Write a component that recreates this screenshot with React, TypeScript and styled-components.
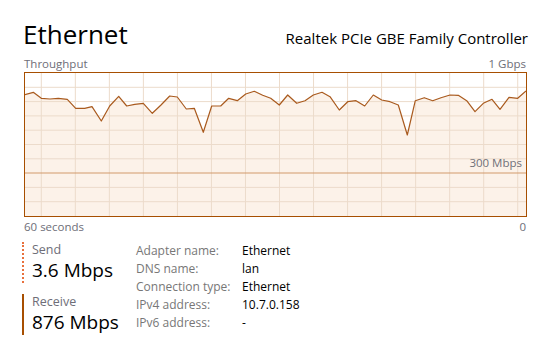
import styled, { createGlobalStyle } from 'styled-components';

const GlobalStyle = createGlobalStyle`
  body {
    margin: 0;
    background: #fff;
    font-family: 'Open Sans', 'Noto Sans', sans-serif;
    color: #000;
  }
`;

// throughput samples, one per second (graph coordinates)
const samples: [number, number][] = [
  [24, 95], [33.3, 92.3], [41.3, 98.3], [50, 99], [58.3, 98.3], [67.3, 99.3],
  [75.7, 108.3], [84.7, 108.3], [92, 106.7], [101.3, 121], [109.7, 106],
  [118.7, 96.3], [126.7, 106], [134.7, 104.3], [143.3, 103.3], [152.3, 113.3],
  [161, 105], [169.7, 96], [177.3, 97], [186.3, 109], [194.3, 108.3],
  [203.3, 132.3], [211.7, 106], [220.7, 106], [228.7, 98.3], [237.3, 100.7],
  [245.7, 94], [254.3, 91.3], [262.7, 95.3], [270.7, 98.3], [279.3, 105],
  [287.7, 95], [296.7, 103.3], [305, 100.7], [313.3, 95], [322, 92.3],
  [330, 96.7], [339.3, 110], [347.7, 101.7], [356, 100.7], [364.7, 106],
  [373.3, 95], [381.7, 100], [390, 101.7], [398.3, 105], [407.3, 135],
  [415.3, 100.7], [424.3, 97.7], [432.7, 100.7], [441, 97.7], [450, 95],
  [458.3, 95.3], [466.7, 100.7], [475, 111.7], [483.3, 103.3], [492, 99.3],
  [500, 109.3], [509, 97.3], [517.7, 98.3], [526, 91],
];

const info: [string, string][] = [
  ['Adapter name:', 'Ethernet'],
  ['DNS name:', 'lan'],
  ['Connection type:', 'Ethernet'],
  ['IPv4 address:', '10.7.0.158'],
  ['IPv6 address:', '-'],
];

const Chart: React.FC = () => {
  const line = samples.map(([x, y]) => `${x},${y}`).join(' ');
  const area = `${line} 526,216 24,216`;
  const cols = Array.from({ length: 15 }, (_, i) => 41.3 + i * 34.03);
  const rows = Array.from({ length: 9 }, (_, i) => 73 + (i + 1) * 14.3);
  return (
    <svg width="501" height="143" viewBox="25 73 501 143" style={{ display: 'block' }}>
      <rect x="25" y="73" width="501" height="143" fill="#fff" />
      <polygon points={area} fill="#fcf2e9" />
      {cols.map((x) => (
        <line key={x} x1={x} x2={x} y1={73} y2={216} stroke="#ecdbcb" strokeWidth="1" />
      ))}
      {rows.map((y, i) =>
        i === 6 ? null : (
          <line key={y} x1={25} x2={526} y1={y} y2={y} stroke="#ecdbcb" strokeWidth="1" />
        ),
      )}
      <line x1={25} x2={526} y1={173} y2={173} stroke="#d29a6c" strokeWidth="1.2" />
      <polyline points={line} fill="none" stroke="#a95a1e" strokeWidth="1.2" strokeLinejoin="round" />
      <text x="522" y="167" textAnchor="end" fontSize="11.5" fill="#707078" fontFamily="'Open Sans', sans-serif">
        300 Mbps
      </text>
    </svg>
  );
};

const App: React.FC = () => {
  return (
    <>
      <GlobalStyle />
      <Page>
        <Header>
          <Title>Ethernet</Title>
          <Adapter>Realtek PCIe GBE Family Controller</Adapter>
        </Header>
        <AxisRow>
          <span>Throughput</span>
          <span>1 Gbps</span>
        </AxisRow>
        <GraphFrame>
          <Chart />
        </GraphFrame>
        <AxisRow>
          <span>60 seconds</span>
          <span>0</span>
        </AxisRow>
        <Details>
          <Stats>
            <Stat $dotted>
              <StatLabel>Send</StatLabel>
              <StatValue>3.6 Mbps</StatValue>
            </Stat>
            <Stat>
              <StatLabel>Receive</StatLabel>
              <StatValue>876 Mbps</StatValue>
            </Stat>
          </Stats>
          <InfoTable>
            {info.map(([k, v]) => (
              <InfoRow key={k}>
                <InfoKey>{k}</InfoKey>
                <InfoValue>{v}</InfoValue>
              </InfoRow>
            ))}
          </InfoTable>
        </Details>
      </Page>
    </>
  );
};

const Page = styled.div`
  display: flex;
  flex-direction: column;
  width: 549px;
  height: 346px;
  box-sizing: border-box;
  padding: 16px 22px 0 24px;
`;

const Header = styled.div`
  display: flex;
  justify-content: space-between;
  align-items: baseline;
  height: 38px;
`;

const Title = styled.div`
  font-size: 26px;
  line-height: 36px;
  margin-left: -1px;
`;

const Adapter = styled.div`
  font-size: 15px;
  line-height: 20px;
  margin-right: -1px;
`;

const AxisRow = styled.div`
  display: flex;
  justify-content: space-between;
  height: 18px;
  align-items: center;
  font-size: 11.5px;
  color: #6e6e78;
  & > span:last-child {
    margin-right: 1px;
  }
`;

const GraphFrame = styled.div`
  width: 501px;
  height: 143px;
  border: 1px solid #a74f01;
`;

const Details = styled.div`
  display: flex;
  margin-top: 5px;
  margin-left: -2px;
`;

const Stats = styled.div`
  display: flex;
  flex-direction: column;
  gap: 11px;
  width: 114px;
  padding-top: 2px;
`;

const Stat = styled.div<{ $dotted?: boolean }>`
  display: flex;
  flex-direction: column;
  padding-left: 8px;
  border-left: 2px ${(p) => (p.$dotted ? 'dotted #e8703c' : 'solid #a74f01')};
`;

const StatLabel = styled.div`
  font-size: 12.5px;
  line-height: 16px;
  color: #6e6e78;
`;

const StatValue = styled.div`
  font-size: 19px;
  line-height: 25px;
`;

const InfoTable = styled.div`
  display: flex;
  flex-direction: column;
  padding-top: 1px;
`;

const InfoRow = styled.div`
  display: grid;
  grid-template-columns: 106px auto;
  height: 18px;
  align-items: center;
  font-size: 12px;
`;

const InfoKey = styled.span`
  color: #777;
`;

const InfoValue = styled.span`
  color: #000;
`;

export default App;
